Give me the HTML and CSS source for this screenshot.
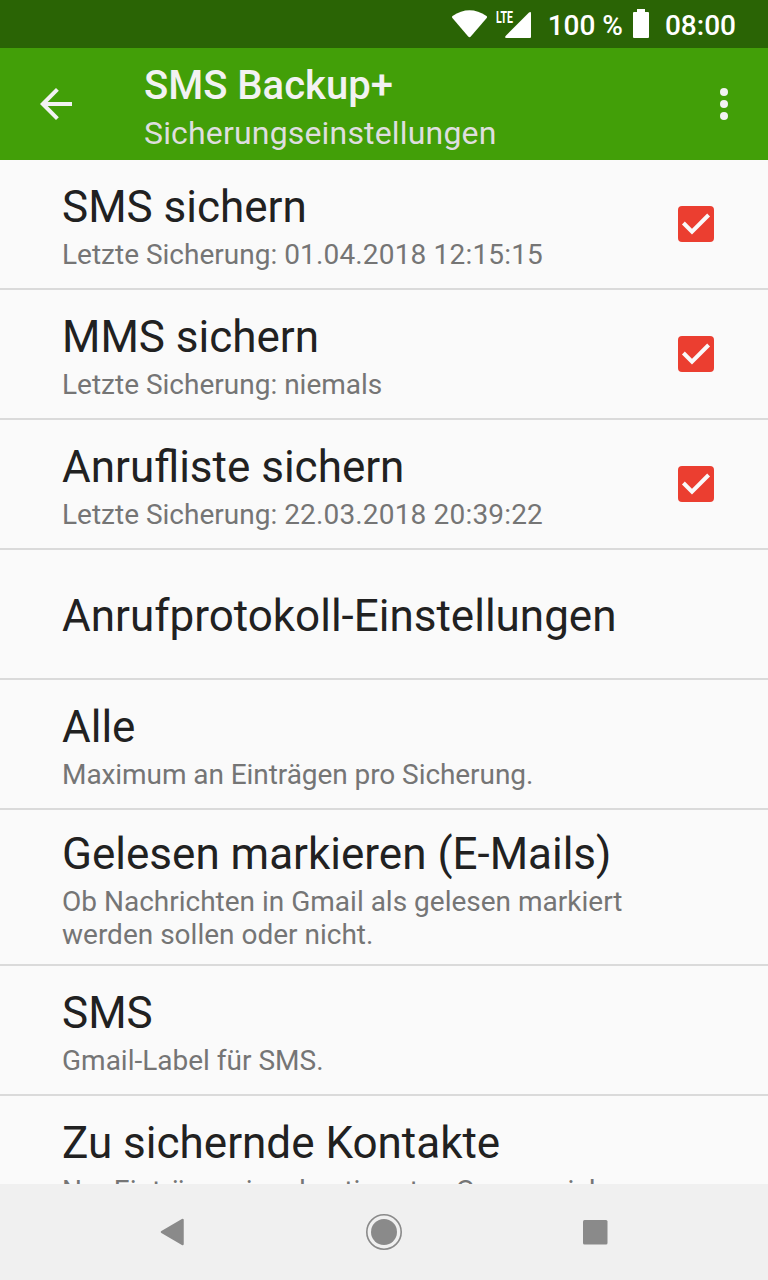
FILE: index.html
```html
<!DOCTYPE html>
<html lang="de">
<head>
<meta charset="utf-8">
<title>SMS Backup+</title>
<link rel="stylesheet" href="styles.css">
</head>
<body>
<div class="screen">
  <div class="status">
    <svg class="wifi" width="36" height="28" viewBox="0 0 36 28"><path d="M0.500 6Q17.500-5.500 34.500 6Q35.500 7 34.700 8L19 26.300Q17.500 28 16 26.300L0.400 8Q-.4 7 .5 6Z" fill="#fff"/></svg>
    <span class="signal"><svg width="26" height="26" viewBox="0 0 26 26"><path d="M24 .6Q26-.8 26 1.500V25Q26 26 25 26H1.500Q-.8 26 .6 24Z" fill="#fff"/></svg><span class="lte">LTE</span></span>
    <span class="percent">100 %</span>
    <svg class="battery" width="16" height="29" viewBox="0 0 16 29"><path d="M4 0H12V3H15Q16 3 16 4V28Q16 29 15 29H1Q0 29 0 28V4Q0 3 1 3H4Z" fill="#fff"/></svg>
    <span class="clock">08:00</span>
  </div>
  <header class="appbar">
    <svg class="back" width="32" height="32" viewBox="0 0 32 32"><path d="M32 16H4M17.400 1.400L2.800 16L17.400 30.600" fill="none" stroke="#f2f2f2" stroke-width="4"/></svg>
    <div class="titles"><h1>SMS Backup+</h1><p>Sicherungseinstellungen</p></div>
    <svg class="more" width="8" height="32" viewBox="0 0 8 32" fill="#f2f2f2"><circle cx="4" cy="4" r="4"/><circle cx="4" cy="16" r="4"/><circle cx="4" cy="28" r="4"/></svg>
  </header>
  <main class="list">
    <div class="row"><div class="text"><h2>SMS sichern</h2><p>Letzte Sicherung: <span class="date">01.04.2018 12:15:15</span></p></div><svg class="check" width="36" height="36" viewBox="0 0 36 36"><rect width="36" height="36" rx="4" fill="#eb3e30"/><path d="M5.400 17L14 25.600L30.600 9" fill="none" stroke="#fafafa" stroke-width="4"/></svg></div>
    <div class="row"><div class="text"><h2>MMS sichern</h2><p>Letzte Sicherung: niemals</p></div><svg class="check" width="36" height="36" viewBox="0 0 36 36"><rect width="36" height="36" rx="4" fill="#eb3e30"/><path d="M5.400 17L14 25.600L30.600 9" fill="none" stroke="#fafafa" stroke-width="4"/></svg></div>
    <div class="row"><div class="text"><h2>Anrufliste sichern</h2><p>Letzte Sicherung: <span class="date">22.03.2018 20:39:22</span></p></div><svg class="check" width="36" height="36" viewBox="0 0 36 36"><rect width="36" height="36" rx="4" fill="#eb3e30"/><path d="M5.400 17L14 25.600L30.600 9" fill="none" stroke="#fafafa" stroke-width="4"/></svg></div>
    <div class="row single"><div class="text"><h2>Anrufprotokoll-Einstellungen</h2></div></div>
    <div class="row"><div class="text"><h2>Alle</h2><p class="tight">Maximum an Einträgen pro Sicherung.</p></div></div>
    <div class="row tall"><div class="text"><h2>Gelesen markieren (E-Mails)</h2><p>Ob Nachrichten in Gmail als gelesen markiert werden sollen oder nicht.</p></div></div>
    <div class="row"><div class="text"><h2>SMS</h2><p>Gmail-Label für SMS.</p></div></div>
    <div class="row"><div class="text"><h2>Zu sichernde Kontakte</h2><p><span class="lead">Nur Einträge</span> einer bestimmten Gruppe sichern.</p></div></div>
  </main>
  <nav class="navbar">
    <svg width="24" height="28" viewBox="0 0 24 28"><path d="M22.500 2V26L2 14Z" fill="#8a8a8a" stroke="#8a8a8a" stroke-width="2.500" stroke-linejoin="round"/></svg>
    <svg width="36" height="36" viewBox="0 0 36 36"><circle cx="18" cy="18" r="17.200" fill="none" stroke="#8a8a8a" stroke-width="1.600"/><circle cx="18" cy="18" r="13" fill="#8a8a8a"/></svg>
    <svg width="25" height="25" viewBox="0 0 25 25"><rect width="24.500" height="24.500" rx="1.500" fill="#8a8a8a"/></svg>
  </nav>
</div>
</body>
</html>
```
FILE: styles.css
```css
* { box-sizing: border-box; }
body, h1, h2, p { margin: 0; font-weight: 400; }
body { font-family: Roboto, sans-serif; }
svg { display: block; flex: none; }
.screen { width: 768px; height: 1280px; display: flex; flex-direction: column; overflow: hidden; background: #fafafa; }
.status { height: 48px; flex: none; background: #2a6405; color: #fff; display: flex; align-items: center; justify-content: flex-end; padding: 2px 32px 0 0; font-size: 28px; font-weight: 500; }
.wifi { margin-bottom: 3px; }
.signal { position: relative; margin: 0 0 1px 17px; }
.lte { position: absolute; left: -9px; top: -3px; font-size: 17px; line-height: 16px; font-weight: 700; transform: scaleX(.62); transform-origin: left; }
.percent { margin-left: 17px; }
.battery { margin: 0 0 3px 10px; }
.clock { margin-left: 16px; }
.appbar { height: 112px; flex: none; background: #429f08; display: flex; align-items: center; padding: 0 40px; }
.titles { flex: 1; margin-left: 72px; padding-top: 10px; }
.titles h1 { font-size: 40px; line-height: 47px; font-weight: 500; color: #f2f2f2; }
.titles p { font-size: 32px; line-height: 48px; letter-spacing: .17px; color: #dedede; }
.list { flex: 1; min-height: 0; overflow: hidden; }
.row { height: 130px; display: flex; align-items: center; padding: 0 54px 0 62px; border-bottom: 2px solid #dadada; }
.row.tall { height: 156px; }
.row.single { padding-top: 4px; }
.text { flex: 1; padding-top: 3px; }
.single .text { padding-top: 0; }
.tall .text { padding-top: 5px; }
.row h2 { font-size: 44px; line-height: 52px; color: #212121; white-space: nowrap; }
.row p { font-size: 28px; line-height: 33px; margin-top: 5px; color: #757575; max-width: 600px; }
.date { letter-spacing: .17px; }
.lead { margin-right: 8px; }
.row .tight { letter-spacing: -.07px; }
.navbar { height: 96px; flex: none; background: #f0f0f0; display: flex; align-items: center; justify-content: space-between; padding: 0 160px; }
```
